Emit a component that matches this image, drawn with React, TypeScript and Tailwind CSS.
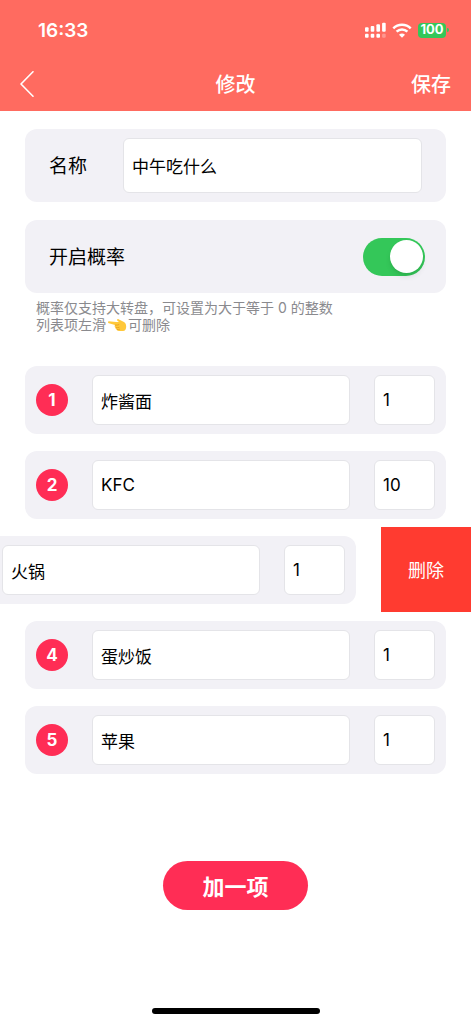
import { useState } from "react";

type Item = { id: number; name: string; weight: string };

const initialItems: Item[] = [
  { id: 1, name: "炸酱面", weight: "1" },
  { id: 2, name: "KFC", weight: "10" },
  { id: 3, name: "火锅", weight: "1" },
  { id: 4, name: "蛋炒饭", weight: "1" },
  { id: 5, name: "苹果", weight: "1" },
];

const fieldClass =
  "min-w-0 rounded-md border border-[#e4e4e8] bg-white px-2 text-[17px] text-black outline-none";

function SignalIcon() {
  return (
    <svg width="21" height="16" viewBox="0 0 21 16" fill="white" aria-hidden="true">
      <rect x="0" y="5.3" width="3.6" height="4.4" rx="1" />
      <rect x="5.7" y="3.9" width="3.6" height="5.8" rx="1" />
      <rect x="11.4" y="2.3" width="3.6" height="7.4" rx="1" />
      <rect x="17.1" y="0.8" width="3.6" height="8.9" rx="1" />
      <rect x="0" y="11.7" width="3.6" height="4" rx="1" />
      <rect x="5.7" y="11.7" width="3.6" height="4" rx="1" />
      <rect x="11.4" y="11.7" width="3.6" height="4" rx="1" />
      <rect x="17.1" y="11.7" width="3.6" height="4" rx="1" opacity="0.3" />
    </svg>
  );
}

function WifiIcon() {
  return (
    <svg width="20" height="15" viewBox="0 0 20 15" fill="none" stroke="white" aria-hidden="true">
      <path d="M1.3 5.3C6.1 0.5 13.9 0.5 18.7 5.3" strokeWidth="2.5" />
      <path d="M4.6 8.7C7.6 5.7 12.4 5.7 15.4 8.7" strokeWidth="2.5" />
      <path d="M7 11.7C8.7 10 11.3 10 13 11.7L10 14.7Z" fill="white" stroke="none" />
    </svg>
  );
}

function PointLeftIcon() {
  return (
    <svg
      className="mx-px inline-block align-[-2px]"
      width="20"
      height="14"
      viewBox="0 0 20 14"
      role="img"
      aria-label="向左"
    >
      <path
        d="M1.8 3.2C0.9 3.4 0.7 4.9 1.9 5.3L8 7C7.2 8.2 7.7 9.2 8.6 9.6C8.3 10.6 8.9 11.4 9.8 11.6C10 12.7 11 13.1 12.2 13H16C18.2 13 19.2 11.2 19.2 8.5C19.2 6 18 4.3 16 3.6L11.5 1.2C10.4 0.7 9.5 1.9 10.4 2.7L12 4.1C8.5 4.1 4.5 3.4 1.8 3.2Z"
        fill="#ffc83a"
      />
      <path
        d="M8 7.1C9.5 7.2 11 7.1 12.2 6.6M8.6 9.6C10 9.8 11.4 9.6 12.5 9.2M9.8 11.6C11 11.7 12 11.6 12.9 11.1"
        fill="none"
        stroke="#e39a1c"
        strokeWidth="0.8"
      />
    </svg>
  );
}

function ItemRow({ item, open }: { item: Item; open: boolean }) {
  return (
    <li className="flex h-[85px] justify-end overflow-hidden">
      <div className="w-full shrink-0 px-[25px] pt-[9px]">
        <div className="flex h-[68px] items-center rounded-xl bg-[#f2f1f6] px-[11px]">
          <span className="mr-6 flex size-8 shrink-0 items-center justify-center rounded-full bg-[#ff2d55] pt-0.5 text-[17px] font-bold text-white">
            {!open && item.id}
          </span>
          <input
            aria-label={`第${item.id}项名称`}
            defaultValue={item.name}
            className={`${fieldClass} h-[50px] flex-1`}
          />
          <input
            aria-label={`第${item.id}项概率`}
            defaultValue={item.weight}
            inputMode="numeric"
            className={`${fieldClass} ml-6 h-[50px] w-[61px]`}
          />
        </div>
      </div>
      {open && (
        <button type="button" className="w-[90px] shrink-0 bg-[#ff3b30] pt-[3px] text-lg text-white">
          删除
        </button>
      )}
    </li>
  );
}

export default function App() {
  const [weighted, setWeighted] = useState(true);

  return (
    <div className="flex min-h-screen flex-col overflow-hidden bg-white font-['Inter','Noto_Sans_CJK_SC',sans-serif] text-black">
      <header className="bg-[#ff6b60] text-white">
        <div className="flex h-[60px] items-center justify-between pr-[22px] pl-[38px]">
          <span className="pt-0.5 text-[19px] font-semibold">16:33</span>
          <div className="flex items-center gap-1.5">
            <SignalIcon />
            <WifiIcon />
            <div className="flex items-center gap-px">
              <span className="flex h-[15px] w-7 items-center justify-center rounded bg-[#34c759] text-[13px] font-bold">
                100
              </span>
              <span className="h-1 w-0.5 rounded-r bg-[#34c759]" />
            </div>
          </div>
        </div>
        <nav className="grid h-[51px] grid-cols-3 items-center px-5 pb-1 text-xl font-medium">
          <button type="button" aria-label="返回" className="justify-self-start">
            <svg width="14" height="26" viewBox="0 0 14 26" fill="none" stroke="white" strokeWidth="1.6">
              <path d="M13 0.8L1 13L13 25.2" strokeLinecap="round" strokeLinejoin="round" />
            </svg>
          </button>
          <h1 className="justify-self-center pt-[3px]">修改</h1>
          <button type="button" className="justify-self-end pt-[3px]">
            保存
          </button>
        </nav>
      </header>

      <main className="flex flex-col pt-[18px]">
        <div className="mx-[25px] flex h-[73px] items-center rounded-xl bg-[#f2f1f6] px-6">
          <label htmlFor="wheel-name" className="w-[74px] shrink-0 pt-[3px] text-[19px]">
            名称
          </label>
          <input
            id="wheel-name"
            defaultValue="中午吃什么"
            className={`${fieldClass} h-[55px] flex-1`}
          />
        </div>

        <div className="mx-[25px] mt-[18px] flex h-[73px] items-center justify-between rounded-xl bg-[#f2f1f6] pr-[21px] pl-6">
          <label htmlFor="weighted" className="pt-[3px] text-[19px]">
            开启概率
          </label>
          <input
            id="weighted"
            type="checkbox"
            role="switch"
            checked={weighted}
            onChange={(e) => setWeighted(e.target.checked)}
            className="flex h-[38px] w-[62px] appearance-none items-center rounded-full bg-[#d9d9de] px-0.5 before:size-[33px] before:rounded-full before:bg-white before:shadow-md before:content-[''] checked:justify-end checked:bg-[#34c759]"
          />
        </div>

        <p className="mx-9 mt-1.5 text-sm leading-[17px] text-[#8a8a8e]">
          概率仅支持大转盘，可设置为大于等于 0 的整数
          <br />
          列表项左滑
          <PointLeftIcon />
          可删除
        </p>

        <ul className="mt-6">
          {initialItems.map((item) => (
            <ItemRow key={item.id} item={item} open={item.id === 3} />
          ))}
        </ul>

        <button
          type="button"
          className="mt-[79px] h-[49px] w-[145px] self-center rounded-full bg-[#ff2d55] pt-[3px] text-[22px] font-bold text-white"
        >
          加一项
        </button>
      </main>

      <div className="mt-auto mb-2.5 h-1.5 w-[168px] self-center rounded-full bg-black" />
    </div>
  );
}
